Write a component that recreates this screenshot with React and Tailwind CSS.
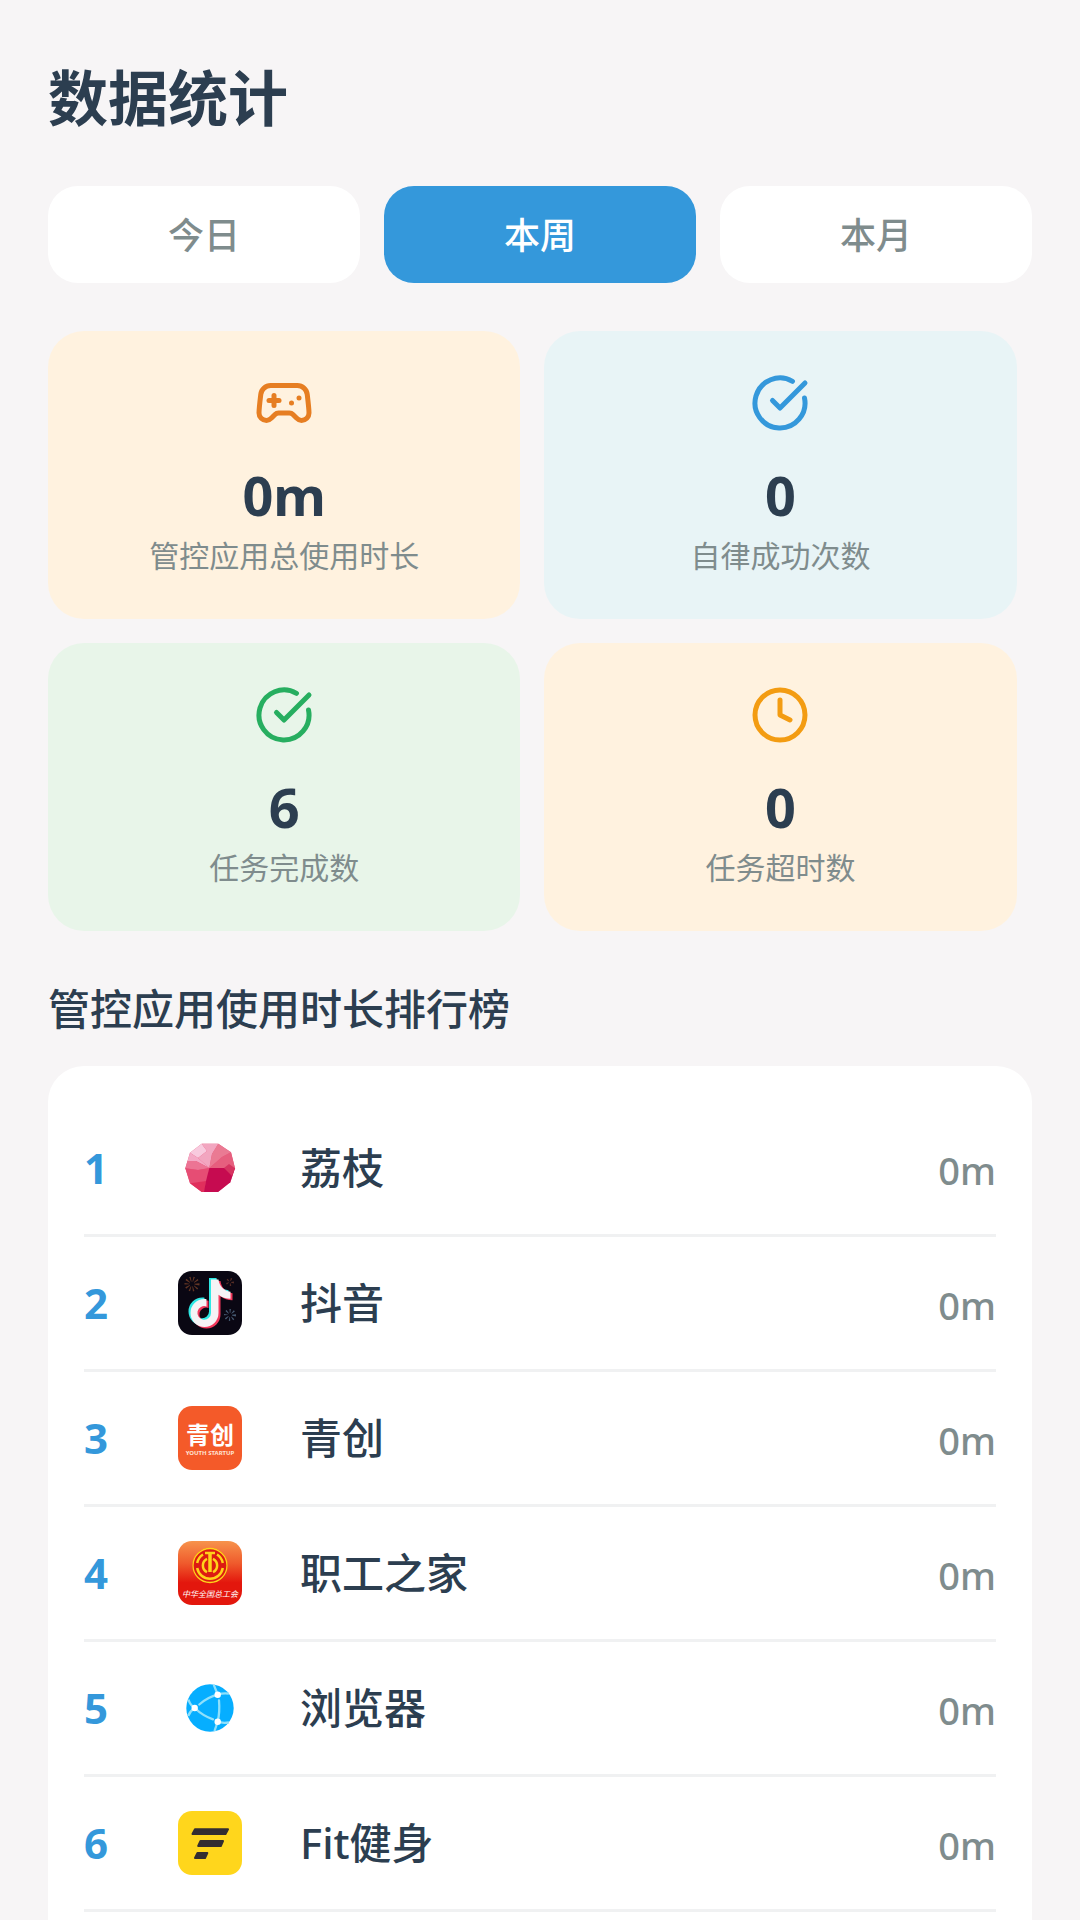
import { useState } from 'react';
import { CircleCheckBig, Clock, Gamepad2 } from 'lucide-react';

const PERIODS = ['今日', '本周', '本月'];

const STATS = [
  { icon: Gamepad2, value: '0m', label: '管控应用总使用时长', bg: 'bg-[#fff2df]', color: 'text-[#e67e22]' },
  { icon: CircleCheckBig, value: '0', label: '自律成功次数', bg: 'bg-[#e8f4f6]', color: 'text-[#3498db]' },
  { icon: CircleCheckBig, value: '6', label: '任务完成数', bg: 'bg-[#e8f5e9]', color: 'text-[#27ae60]' },
  { icon: Clock, value: '0', label: '任务超时数', bg: 'bg-[#fff2df]', color: 'text-[#f39c12]' },
];

const RANKING = [
  { name: '荔枝', time: '0m', icon: LycheeIcon },
  { name: '抖音', time: '0m', icon: DouyinIcon },
  { name: '青创', time: '0m', icon: YouthIcon },
  { name: '职工之家', time: '0m', icon: UnionIcon },
  { name: '浏览器', time: '0m', icon: BrowserIcon },
  { name: 'Fit健身', time: '0m', icon: FitIcon },
];

// App icons share a 64x64 canvas
function LycheeIcon() {
  return (
    <svg viewBox="0 0 64 64" className="w-16 h-16" aria-hidden="true">
      <path d="M23.7 7.7H40.3L53 16.3L57 32.3L52.3 46.3L40 56H23.7L12 47.3L7.3 32.3L12 16.7Z" fill="#e8557c" />
      <path d="M23.7 7.7L29 15L20 22L12 16.7Z" fill="#f8cade" />
      <path d="M12 16.7L20 22L31.3 32L18 25L9.5 25Z" fill="#f4aac6" />
      <path d="M23.7 7.7H40.3L34 18L31.3 32L20 22L29 15Z" fill="#f2a6c0" />
      <path d="M40.3 7.7L53 16.3L44 21L31.3 32L34 18Z" fill="#ea7a93" />
      <path d="M53 16.3L57 32.3H31.3L44 21Z" fill="#e65f7e" />
      <path d="M9.5 25H18L31.3 32L20 34L7.3 32.3Z" fill="#ec7494" />
      <path d="M7.3 32.3L20 34L31.3 32L28 45L12 47.3Z" fill="#e64d74" />
      <path d="M12 47.3L28 45L26.5 56H23.7Z" fill="#e02f5c" />
      <path d="M31.3 32H57L52.3 46.3L40 56H26L28 45Z" fill="#c60b50" />
      <path d="M46 32L51 28L57 32.3L54 40Z" fill="#d63460" />
    </svg>
  );
}

const NOTE = 'M33 8h7.5c.6 6.5 5.5 11.5 12 12.2v7c-4.6 0-8.8-1.4-12-3.9V41.5a14 14 0 1 1-14-14c.8 0 1.3 0 2 .2v7.3a6.8 6.8 0 1 0 4.5 6.4z';

function DouyinIcon() {
  return (
    <svg viewBox="0 0 64 64" className="w-16 h-16" aria-hidden="true">
      <rect width="64" height="64" rx="14" fill="#0a0713" />
      <circle cx="14" cy="13" r="5" fill="none" stroke="#8a4a2c" strokeWidth="5" strokeDasharray="1 2" opacity="0.7" />
      <circle cx="52" cy="11" r="2.5" fill="none" stroke="#7a4030" strokeWidth="3" strokeDasharray="1 2" opacity="0.7" />
      <circle cx="52" cy="44" r="4" fill="none" stroke="#56708c" strokeWidth="4" strokeDasharray="1 2" opacity="0.8" />
      <path d={NOTE} fill="#2ee8e4" transform="translate(-2 -1)" />
      <path d={NOTE} fill="#f2385c" transform="translate(2 2)" />
      <path d={NOTE} fill="#f5f3f5" transform="translate(0 0.5)" />
    </svg>
  );
}

function YouthIcon() {
  return (
    <svg viewBox="0 0 64 64" className="w-16 h-16" aria-hidden="true">
      <rect width="64" height="64" rx="14" fill="#f45a29" />
      <text x="32" y="38" textAnchor="middle" fontSize="24" fontWeight="700" fill="#fff">青创</text>
      <text x="32" y="49" textAnchor="middle" fontSize="6" fontWeight="700" fill="#ffe3d3">YOUTH STARTUP</text>
    </svg>
  );
}

function UnionIcon() {
  return (
    <svg viewBox="0 0 64 64" className="w-16 h-16" aria-hidden="true">
      <defs>
        <linearGradient id="union-bg" x1="0" y1="0" x2="0" y2="1">
          <stop offset="0" stopColor="#f7934c" />
          <stop offset="0.35" stopColor="#ef5a2c" />
          <stop offset="0.65" stopColor="#e3170d" />
        </linearGradient>
      </defs>
      <rect width="64" height="64" rx="14" fill="url(#union-bg)" />
      <circle cx="32" cy="24.5" r="17.5" fill="#dc1b12" />
      <g fill="none" stroke="#ffd21a">
        <circle cx="32" cy="24.5" r="17" strokeWidth="1.3" />
        <path d="M25 13.5A13 13 0 0 0 19.2 22M19.2 27A13 13 0 0 0 44.8 27M44.8 22A13 13 0 0 0 39 13.5" strokeWidth="2.5" />
        <path d="M27 12H37" strokeWidth="2.5" />
        <path d="M32 12V31" strokeWidth="3.5" />
        <path d="M29 17.8A7.5 7.5 0 0 0 29 31.2M35 17.8A7.5 7.5 0 0 1 35 31.2" strokeWidth="2.5" />
      </g>
      <text x="32" y="56" textAnchor="middle" fontSize="8" fontStyle="italic" fontWeight="400" fill="#fff">中华全国总工会</text>
    </svg>
  );
}

function BrowserIcon() {
  return (
    <svg viewBox="0 0 64 64" className="w-16 h-16" aria-hidden="true">
      <circle cx="32" cy="32" r="23.7" fill="#06aeff" />
      <g fill="none" stroke="#8fe0fb" strokeWidth="2.3">
        <path d="M21.3 28.5Q30 21 39.7 18.7M41 24.5Q42 36 39.7 45.7M16.7 32Q25 40 35 43.3" strokeLinecap="round" />
        <path d="M39.7 18.7L35.8 8.8M39.7 18.7Q46 16.5 51 17.7M16.7 32Q12 29 10.5 23.5M16.7 32Q12 35 10.2 40M39.7 45.7Q45 47.5 51 46.3M39.7 45.7L36.5 55" />
      </g>
      <circle cx="39.7" cy="18.7" r="3.2" fill="#fff" />
      <circle cx="16.7" cy="32" r="3.2" fill="#fff" />
      <circle cx="39.7" cy="45.7" r="3.2" fill="#fff" />
    </svg>
  );
}

function FitIcon() {
  return (
    <svg viewBox="0 0 64 64" className="w-16 h-16" aria-hidden="true">
      <rect width="64" height="64" rx="14" fill="#ffd61c" />
      <g fill="#332d31" stroke="#332d31" strokeWidth="2" strokeLinejoin="round">
        <path d="M17 18.3H50L47.5 23H14.5Z" />
        <path d="M22.5 30H45L42.8 35H20.2Z" />
        <path d="M19.5 42H29.3L27 47H17Z" />
      </g>
    </svg>
  );
}

function StatCard({ icon: Icon, value, label, bg, color }) {
  return (
    <div className={`w-[48%] flex flex-col items-center rounded-[36px] py-[42px] ${bg}`}>
      <Icon className={color} size={60} strokeWidth={2} aria-hidden="true" />
      <p className="mt-[26px] text-[54px] leading-[72px] font-bold text-[#2c3e50]">{value}</p>
      <p className="mt-1 text-[30px] leading-[42px] text-[#7f8c8d]">{label}</p>
    </div>
  );
}

function App() {
  const [period, setPeriod] = useState('本周');

  return (
    <main className="min-h-screen flex flex-col bg-[#f7f5f6] px-12 pt-14 font-['Noto_Sans','Noto_Sans_CJK_SC',sans-serif]">
      <h1 className="text-[60px] leading-[84px] font-bold text-[#2c3e50]">数据统计</h1>

      <div className="mt-[46px] flex gap-6">
        {PERIODS.map((item) => (
          <button
            key={item}
            type="button"
            aria-pressed={item === period}
            onClick={() => setPeriod(item)}
            className={`flex-1 rounded-[30px] pt-[25px] pb-[23px] text-4xl/[49px] font-medium ${
              item === period ? 'bg-[#3498db] text-white' : 'bg-white text-[#7f8c8d]'
            }`}
          >
            {item}
          </button>
        ))}
      </div>

      <div className="mt-12 flex flex-wrap gap-6">
        {STATS.map((stat) => (
          <StatCard key={stat.label} {...stat} />
        ))}
      </div>

      <h2 className="mt-12 text-[42px] leading-[60px] font-medium text-[#2c3e50]">管控应用使用时长排行榜</h2>

      <ol className="mt-[27px] flex-1 rounded-t-[36px] bg-white px-9 pt-9">
        {RANKING.map(({ name, time, icon: AppIcon }, index) => (
          <li key={name} className="flex items-center border-b-3 border-[#f0f1f2] py-[34px]">
            <span className="w-[94px] text-[42px] leading-[60px] font-bold text-[#3498db]">{index + 1}</span>
            <AppIcon />
            <span className="ml-[58px] flex-1 text-[42px] leading-[60px] font-medium text-[#2c3e50]">{name}</span>
            <span className="pt-1 text-[38px] leading-[60px] font-medium text-[#7f8c8d]">{time}</span>
          </li>
        ))}
      </ol>
    </main>
  );
}

export default App;
